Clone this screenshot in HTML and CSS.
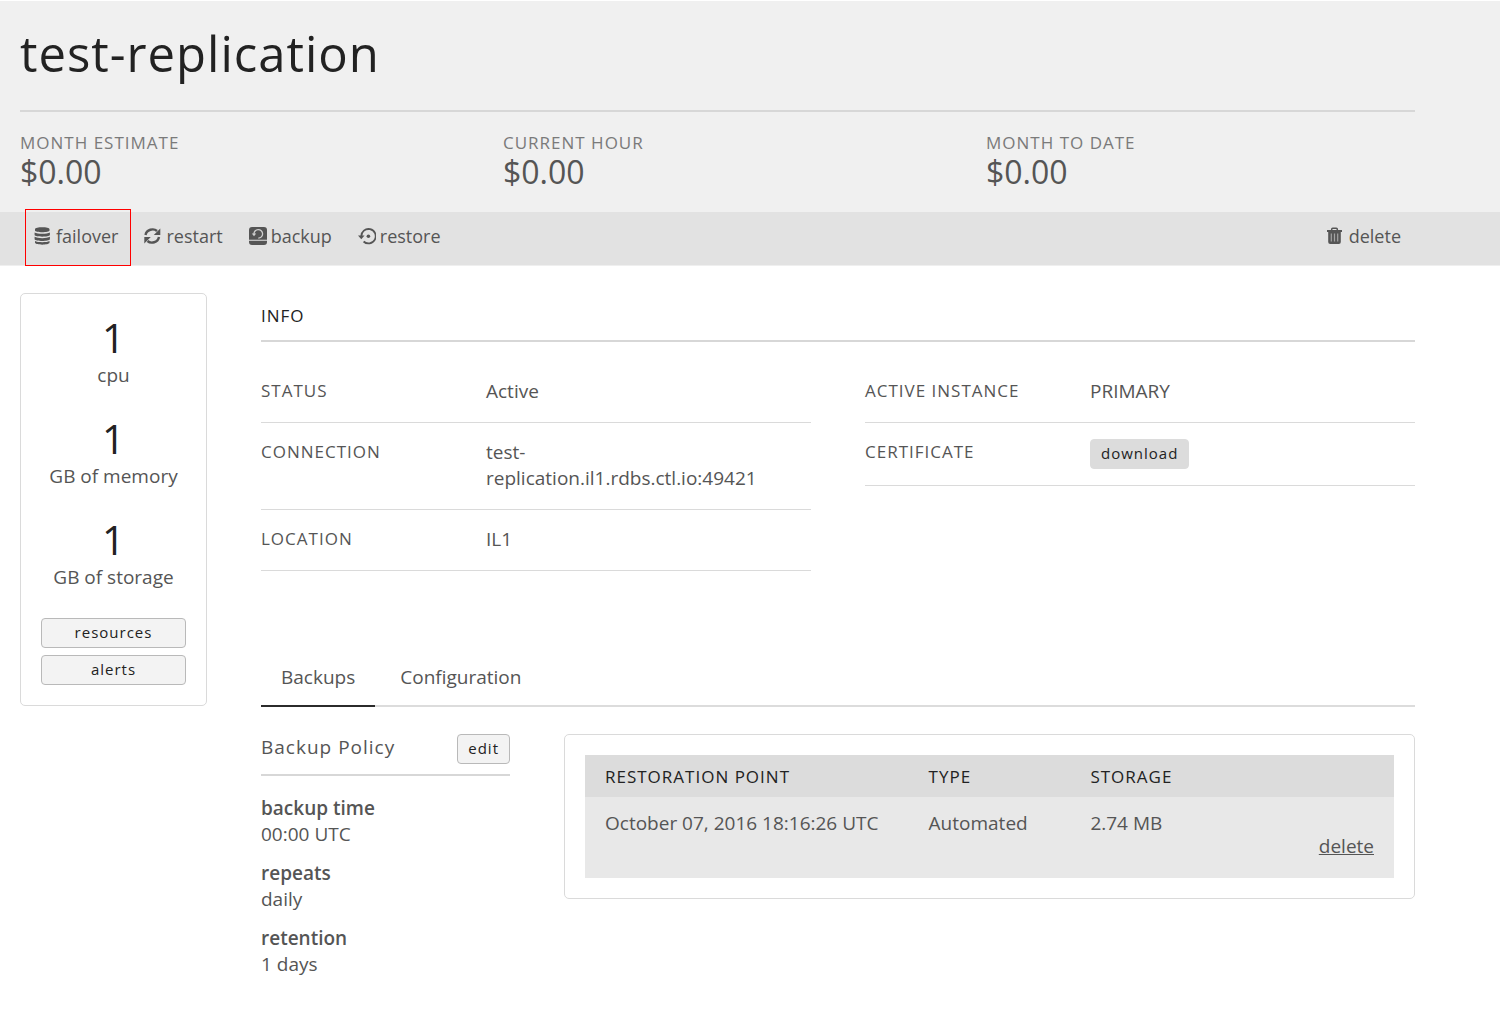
FILE: index.html
```html
<!DOCTYPE html>
<html lang="en">
<head>
<meta charset="utf-8">
<title>test-replication</title>
<link rel="stylesheet" href="styles.css">
</head>
<body>
<header class="masthead">
  <h1 class="title">test-replication</h1>
  <dl class="costs">
    <div><dt>Month estimate</dt><dd>$0.00</dd></div>
    <div><dt>Current hour</dt><dd>$0.00</dd></div>
    <div><dt>Month to date</dt><dd>$0.00</dd></div>
  </dl>
</header>

<nav class="toolbar" aria-label="Database actions">
  <button class="tool highlighted" type="button">
    <svg class="icon" viewBox="0 0 18 18" aria-hidden="true"><path d="M1 2.3C1-.3 15.500-.3 15.500 2.300V3.600C15.500 5.800 1 5.800 1 3.600ZM.6 5.400C3.500 7.200 13 7.200 15.900 5.400V8C15 10.200 1.500 10.200.6 8ZM.6 9.800C3.500 11.600 13 11.600 15.900 9.800V12.300C15 14.500 1.500 14.500.6 12.300ZM1 14C3.500 15.600 13 15.600 15.500 14V15.800C14.500 18.300 2 18.300 1 15.800Z"/></svg>
    failover
  </button>
  <button class="tool" type="button">
    <svg class="icon" viewBox="0 0 18 18" aria-hidden="true"><path d="M1.500 8C2.500 2.500 9.500.8 13 4M15 10C14 15.500 7 17.200 3.500 14" fill="none" stroke="currentColor" stroke-width="2.400"/><path d="M16.300 1.500V8H9.800ZM.3 16.500V10H6.800Z"/></svg>
    restart
  </button>
  <button class="tool" type="button">
    <svg class="icon" viewBox="0 0 18 18" aria-hidden="true"><path d="M3 0H15Q18 0 18 3V12.800H0V3Q0 0 3 0ZM0 13.800H18V15Q18 18 15 18H3Q0 18 0 15Z"/><path d="M5 7.200A4.300 4.300 0 1 1 9.300 11.200" fill="none" stroke="#d0d0d0" stroke-width="1.300"/><path d="M2.800 6.500H7.200L5 9.200Z" fill="#d0d0d0"/></svg>
    backup
  </button>
  <button class="tool" type="button">
    <svg class="icon" viewBox="0 0 18 18" aria-hidden="true"><path d="M3.300 9.500A7.200 7.200 0 1 1 5.600 14.500" fill="none" stroke="currentColor" stroke-width="1.800"/><path d="M0 8.500H6.600L3.300 12.200Z"/><circle cx="10.400" cy="9.300" r="1.800"/></svg>
    restore
  </button>
  <button class="tool tool-end" type="button">
    <svg class="icon" viewBox="0 0 18 18" aria-hidden="true"><path d="M0 3H15V5H0ZM1.200 5H13.800V15Q13.800 17 11.800 17H3.200Q1.200 17 1.200 15Z"/><path d="M4.700 3V2.200Q4.700 1.200 5.700 1.200H9.300Q10.300 1.200 10.300 2.200V3" fill="none" stroke="currentColor" stroke-width="1.500"/><path d="M4.300 6.500V14.500M7.500 6.500V14.500M10.700 6.500V14.500" stroke="#a4a4a4" stroke-width="1.200"/></svg>
    delete
  </button>
</nav>

<main class="page">
  <aside class="card specs">
    <dl class="spec-list">
      <div><dd>1</dd><dt>cpu</dt></div>
      <div><dd>1</dd><dt>GB of memory</dt></div>
      <div><dd>1</dd><dt>GB of storage</dt></div>
    </dl>
    <button class="btn" type="button">resources</button>
    <button class="btn" type="button">alerts</button>
  </aside>

  <div class="content">
    <section class="info">
      <h2 class="section-title">Info</h2>
      <div class="info-columns">
        <dl class="fields">
          <div><dt>Status</dt><dd>Active</dd></div>
          <div><dt>Connection</dt><dd>test-replication.il1.rdbs.ctl.io:49421</dd></div>
          <div><dt>Location</dt><dd>IL1</dd></div>
        </dl>
        <dl class="fields">
          <div><dt>Active instance</dt><dd>PRIMARY</dd></div>
          <div><dt>Certificate</dt><dd><button class="btn btn-flat" type="button">download</button></dd></div>
        </dl>
      </div>
    </section>

    <nav class="tabs" aria-label="Details">
      <a class="tab active" href="#backups">Backups</a>
      <a class="tab" href="#configuration">Configuration</a>
    </nav>

    <div class="backups" id="backups">
      <section class="policy">
        <div class="policy-head">
          <h3>Backup Policy</h3>
          <button class="btn" type="button">edit</button>
        </div>
        <dl class="policy-list">
          <div><dt>backup time</dt><dd>00:00 UTC</dd></div>
          <div><dt>repeats</dt><dd>daily</dd></div>
          <div><dt>retention</dt><dd>1 days</dd></div>
        </dl>
      </section>
      <section class="card restore-points">
        <table>
          <thead>
            <tr><th class="wide" scope="col">Restoration point</th><th scope="col">Type</th><th scope="col">Storage</th><th></th></tr>
          </thead>
          <tbody>
            <tr><td>October 07, 2016 18:16:26 UTC</td><td>Automated</td><td>2.74 MB</td><td class="row-action"><a href="#delete">delete</a></td></tr>
          </tbody>
        </table>
      </section>
    </div>
  </div>
</main>
</body>
</html>
```

FILE: styles.css
```css
* {
  box-sizing: border-box;
}

body {
  margin: 0;
  padding-top: 1px;
  background: #fff;
  color: #555;
  font: 19px/26px "Open Sans", "Noto Sans", sans-serif;
}

h1, h2, h3, dl, dd {
  margin: 0;
  font-weight: 400;
}

button {
  font: inherit;
  cursor: pointer;
}

.masthead {
  padding: 18px 85px 22px 20px;
  background: #f0f0f0;
}

.title {
  padding-bottom: 23px;
  border-bottom: 2px solid #d7d7d7;
  color: #222;
  font-size: 49px;
  line-height: 68px;
  letter-spacing: 1px;
}

.costs {
  display: grid;
  grid-template-columns: repeat(3, 1fr);
  gap: 54px;
  padding-top: 20px;
}

.costs dt,
.fields dt,
.section-title,
th {
  font-size: 17px;
  letter-spacing: 1px;
  text-transform: uppercase;
}

.costs dt {
  line-height: 22px;
  color: #7a7a7a;
}

.costs dd {
  font-size: 32px;
  line-height: 36px;
}

.toolbar {
  display: flex;
  padding: 0 87px 0 20px;
  border-bottom: 1px solid #efefef;
  background: #e2e2e2;
}

.tool {
  position: relative;
  display: flex;
  align-items: center;
  gap: 4px;
  padding: 11px 12px 16px 14px;
  border: 0;
  background: none;
  color: #555;
  font-size: 18px;
}

.tool-end {
  margin-left: auto;
}

.highlighted::after {
  content: "";
  position: absolute;
  inset: -3px -1px -1px 5px;
  border: 1px solid #f00;
}

.icon {
  width: 18px;
  height: 18px;
  fill: currentColor;
}

.page {
  display: grid;
  grid-template-columns: 187px 1fr;
  align-items: start;
  gap: 54px;
  padding: 27px 85px 50px 20px;
}

.card {
  padding: 20px;
  border: 1px solid #dadada;
  border-radius: 5px;
}

.specs {
  display: flex;
  flex-direction: column;
  gap: 7px;
  text-align: center;
}

.spec-list {
  display: grid;
  gap: 27px;
  margin-bottom: 21px;
}

.spec-list dd {
  color: #222;
  font-size: 40px;
  line-height: 48px;
}

.btn {
  height: 30px;
  padding: 0 10px 3px;
  border: 1px solid #b9b9b9;
  border-radius: 4px;
  background: #f3f3f3;
  color: #222;
  font-size: 15px;
  line-height: 24px;
  letter-spacing: 1px;
}

.btn-flat {
  border-color: #dcdcdc;
  background: #dcdcdc;
}

.section-title {
  padding: 10px 0 11px;
  border-bottom: 2px solid #d7d7d7;
  color: #222;
}

.info-columns {
  display: grid;
  grid-template-columns: 1fr 1fr;
  align-items: start;
  gap: 54px;
  padding-top: 20px;
}

.fields > div {
  display: grid;
  grid-template-columns: 9fr 11fr 2fr;
  padding: 16px 0 18px;
  border-bottom: 1px solid #dadada;
}

.fields .btn {
  display: block;
  margin-bottom: -2px;
}

.tabs {
  display: flex;
  margin-top: 74px;
  border-bottom: 2px solid #dcdcdc;
}

.tab {
  margin-bottom: -2px;
  padding: 19px 20px 15px;
  border-bottom: 2px solid transparent;
  color: #555;
  text-decoration: none;
}

.tab.active {
  border-color: #2b2b2b;
}

.tab + .tab {
  margin-left: 5px;
}

.backups {
  display: grid;
  grid-template-columns: 249px 1fr;
  align-items: start;
  gap: 54px;
  padding-top: 27px;
}

.policy-head {
  display: flex;
  justify-content: space-between;
  padding-bottom: 10px;
  border-bottom: 2px solid #d7d7d7;
}

.policy-head h3 {
  font-size: 19px;
  letter-spacing: 1px;
}

.policy-list {
  display: grid;
  gap: 13px;
  padding-top: 19px;
}

.policy-list dt {
  font-weight: 600;
}

table {
  width: 100%;
  table-layout: fixed;
  border-collapse: collapse;
}

th {
  padding: 9px 20px 7px;
  background: #dcdcdc;
  color: #222;
  font-weight: 400;
  text-align: left;
}

.wide {
  width: 40%;
}

td {
  height: 81px;
  padding: 13px 20px 19px;
  background: #e8e8e8;
  vertical-align: top;
}

.row-action {
  text-align: right;
  vertical-align: bottom;
}

.row-action a {
  color: #555;
}
```
